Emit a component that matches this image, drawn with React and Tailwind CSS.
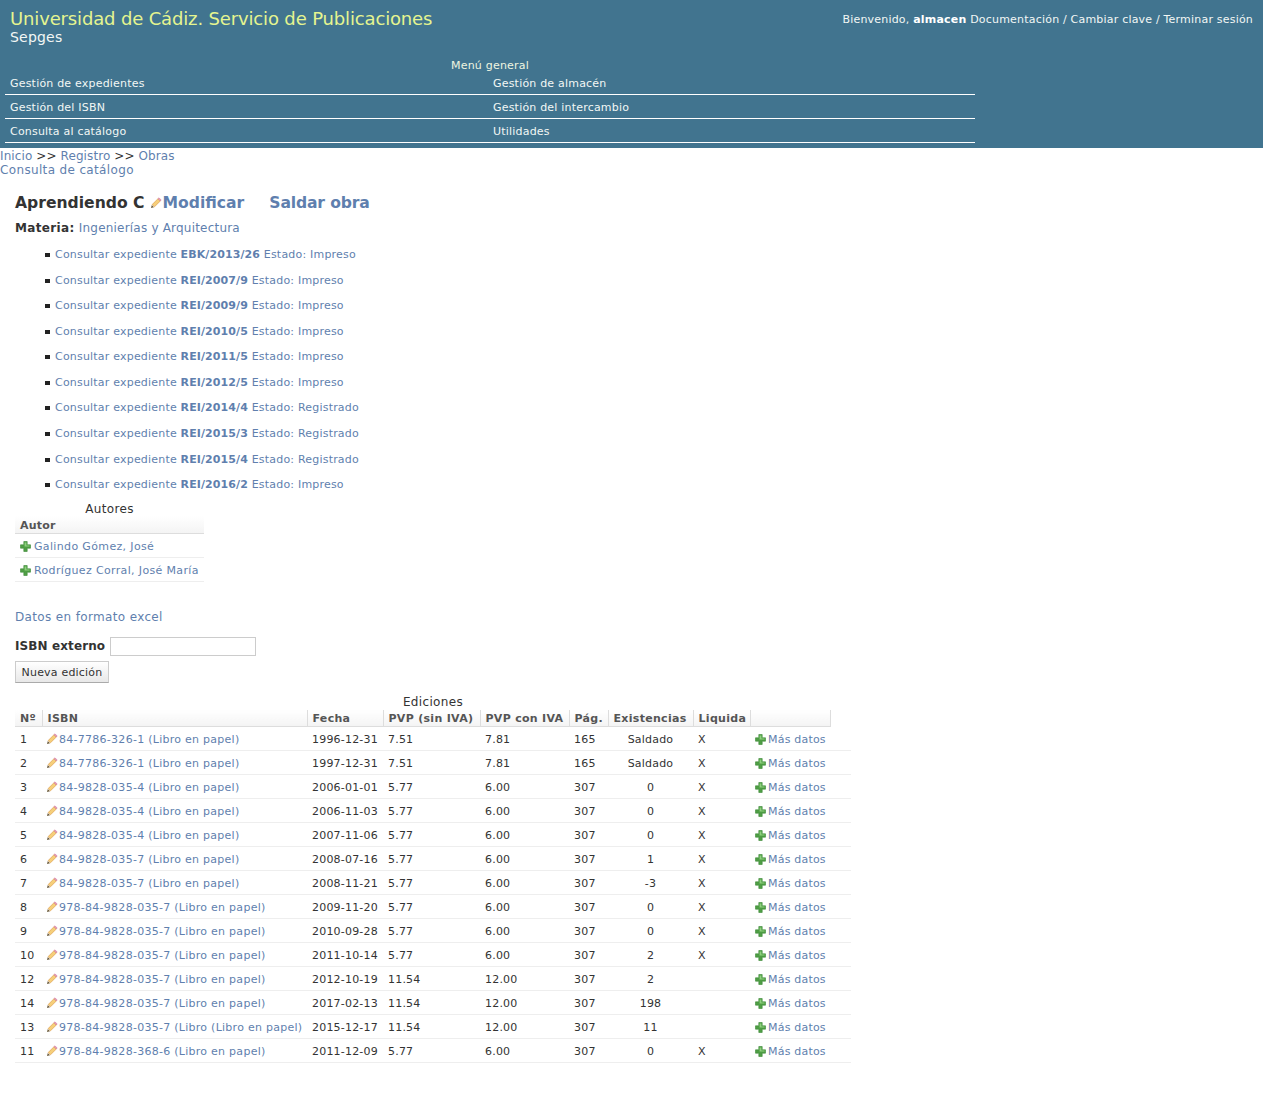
const menu = [
  ["Gestión de expedientes", "Gestión de almacén"],
  ["Gestión del ISBN", "Gestión del intercambio"],
  ["Consulta al catálogo", "Utilidades"],
];

const expedientes = [
  ["EBK/2013/26", "Impreso"],
  ["REI/2007/9", "Impreso"],
  ["REI/2009/9", "Impreso"],
  ["REI/2010/5", "Impreso"],
  ["REI/2011/5", "Impreso"],
  ["REI/2012/5", "Impreso"],
  ["REI/2014/4", "Registrado"],
  ["REI/2015/3", "Registrado"],
  ["REI/2015/4", "Registrado"],
  ["REI/2016/2", "Impreso"],
];

const ediciones = [
  ["1", "84-7786-326-1 (Libro en papel)", "1996-12-31", "7.51", "7.81", "165", "Saldado", "X"],
  ["2", "84-7786-326-1 (Libro en papel)", "1997-12-31", "7.51", "7.81", "165", "Saldado", "X"],
  ["3", "84-9828-035-4 (Libro en papel)", "2006-01-01", "5.77", "6.00", "307", "0", "X"],
  ["4", "84-9828-035-4 (Libro en papel)", "2006-11-03", "5.77", "6.00", "307", "0", "X"],
  ["5", "84-9828-035-4 (Libro en papel)", "2007-11-06", "5.77", "6.00", "307", "0", "X"],
  ["6", "84-9828-035-7 (Libro en papel)", "2008-07-16", "5.77", "6.00", "307", "1", "X"],
  ["7", "84-9828-035-7 (Libro en papel)", "2008-11-21", "5.77", "6.00", "307", "-3", "X"],
  ["8", "978-84-9828-035-7 (Libro en papel)", "2009-11-20", "5.77", "6.00", "307", "0", "X"],
  ["9", "978-84-9828-035-7 (Libro en papel)", "2010-09-28", "5.77", "6.00", "307", "0", "X"],
  ["10", "978-84-9828-035-7 (Libro en papel)", "2011-10-14", "5.77", "6.00", "307", "2", "X"],
  ["12", "978-84-9828-035-7 (Libro en papel)", "2012-10-19", "11.54", "12.00", "307", "2", ""],
  ["14", "978-84-9828-035-7 (Libro en papel)", "2017-02-13", "11.54", "12.00", "307", "198", ""],
  ["13", "978-84-9828-035-7 (Libro (Libro en papel)", "2015-12-17", "11.54", "12.00", "307", "11", ""],
  ["11", "978-84-9828-368-6 (Libro en papel)", "2011-12-09", "5.77", "6.00", "307", "0", "X"],
];

const Pencil = ({ className = "" }) => (
  <svg width="12" height="12" viewBox="0 0 12 12" className={`inline-block align-[-2px] shrink-0 ${className}`}>
    <path d="M1 11 L1.8 8 L4 10.2 Z" fill="#6b5a3a" />
    <path d="M2.2 7.5 L8 1.7 L10.3 4 L4.5 9.8 Z" fill="#f6cf7a" stroke="#d9903a" strokeWidth="0.6" />
    <path d="M8 1.7 L9 0.8 L11.2 3 L10.3 4 Z" fill="#eea0bc" stroke="#c4708f" strokeWidth="0.5" />
  </svg>
);

const Plus = () => (
  <svg width="11" height="11" viewBox="0 0 11 11" className="inline-block align-[-2px] shrink-0">
    <path d="M3.8 0.5 H7.2 V3.8 H10.5 V7.2 H7.2 V10.5 H3.8 V7.2 H0.5 V3.8 H3.8 Z" fill="#4f9e45" stroke="#3c8a38" strokeWidth="0.6" />
    <path d="M4.6 1.5 H6.4 V4.6 H9.5 V5.4 H4.6 Z" fill="#8fd07f" />
  </svg>
);

const linkColor = "text-[#5f7fae]";
const thClass = "h-[17px] whitespace-nowrap px-[5px] pt-[1px] text-left text-[11px] font-bold tracking-[0.3px] text-[#555] border-b border-[#ddd] border-r align-middle leading-[14px] bg-gradient-to-b from-white to-[#f4f4f4]";

export default function App() {
  return (
    <div className="min-h-[1116px] bg-white text-[12px] text-[#333] tracking-[0.35px]" style={{ fontFamily: '"DejaVu Sans", sans-serif' }}>
      <div className="h-[148px] bg-[#41748f] text-[11px] tracking-[0.2px] text-[#f2f7f5]">
        <div className="flex justify-between px-[10px] pt-[8px]">
          <div>
            <div className="text-[18px] leading-[21px] tracking-[-0.15px] text-[#e5f58f]">Universidad de Cádiz. Servicio de Publicaciones</div>
            <div className="text-[14px] leading-[17px] tracking-[0.2px]">Sepges</div>
          </div>
          <div className="pt-[4px] leading-[15px]">
            Bienvenido, <b className="text-white">almacen</b> Documentación / Cambiar clave / Terminar sesión
          </div>
        </div>
        <table className="ml-[5px] mt-[12px] w-[970px] table-fixed border-collapse">
          <caption className="h-[12px] text-center leading-[16px] text-[#eef4e0]">Menú general</caption>
          <tbody>
            {menu.map((row) => (
              <tr key={row[0]} className="h-[24px] border-b border-white">
                <td className="w-[483px] px-[5px] pt-[4px] leading-[14px]">{row[0]}</td>
                <td className="px-[5px] pt-[4px] leading-[14px]">{row[1]}</td>
              </tr>
            ))}
          </tbody>
        </table>
      </div>

      <div className={`pt-[1px] leading-[14px] ${linkColor}`}>
        <div className="tracking-[0.1px]">Inicio <span className="text-[#333]">&gt;&gt;</span> Registro <span className="text-[#333]">&gt;&gt;</span> Obras</div>
        <div>Consulta de catálogo</div>
      </div>

      <div className="px-[15px]">
        <h1 className="mt-[16px] flex items-center text-[15.6px] font-bold leading-[20px] tracking-normal">
          <span>Aprendiendo C</span>
          <span className="ml-[5px] flex"><Pencil /></span>
          <span className="ml-[1px] text-[#5f7fae]">Modificar</span>
          <span className="ml-[25px] tracking-[-0.15px] text-[#5f7fae]">Saldar obra</span>
        </h1>
        <div className="mt-[7px] leading-[16px]">
          <b>Materia:</b> <span className={`tracking-[0.2px] ${linkColor}`}>Ingenierías y Arquitectura</span>
        </div>

        <ul className="mt-[6.4px] pl-[30px] text-[11px] tracking-[0.2px]">
          {expedientes.map(([code, estado]) => (
            <li key={code} className={`flex h-[25.56px] items-center leading-[14px] ${linkColor}`}>
              <span className="mr-[5px] h-[4px] w-[5px] bg-[#222]"></span>
              <span>Consultar expediente <b className="tracking-[0.1px]">{code}</b> Estado: {estado}</span>
            </li>
          ))}
        </ul>

        <table className="mt-[3.6px] w-[189px] table-fixed border-collapse">
          <caption className="h-[15px] text-center leading-[17px]">Autores</caption>
          <thead>
            <tr>
              <th className="h-[17px] px-[5px] pt-[2px] text-left text-[11px] font-bold tracking-[0.2px] text-[#555] border-b border-[#ddd] leading-[14px] bg-gradient-to-b from-white to-[#f4f4f4]">Autor</th>
            </tr>
          </thead>
          <tbody>
            {["Galindo Gómez, José", "Rodríguez Corral, José María"].map((a) => (
              <tr key={a} className="h-[24px] border-b border-[#eee] text-[11px] tracking-[0.35px]">
                <td className={`whitespace-nowrap px-[5px] pt-[4px] leading-[14px] ${linkColor}`}>
                  <Plus /><span className="ml-[3px]">{a}</span>
                </td>
              </tr>
            ))}
          </tbody>
        </table>

        <div className={`mt-[27px] leading-[16px] ${linkColor}`}>Datos en formato excel</div>

        <div className="mt-[12px] flex items-center">
          <b className="text-[12px] tracking-[0.1px]">ISBN externo</b>
          <input type="text" className="ml-[5px] h-[19px] w-[146px] border border-[#ccc] bg-white" />
        </div>
        <button className="mt-[5px] block h-[22px] w-[94px] border border-[#ccc] border-b-[#aaa] bg-gradient-to-b from-white to-[#e8e8e8] pt-[2px] text-center text-[11px] tracking-[0.2px] leading-[14px]">Nueva edición</button>

        <table className="mt-[12px] w-[836px] table-fixed border-collapse">
          <caption className="h-[15px] text-center leading-[15px]">Ediciones</caption>
          <colgroup>
            <col className="w-[27px]" />
            <col className="w-[265px]" />
            <col className="w-[76px]" />
            <col className="w-[97px]" />
            <col className="w-[89px]" />
            <col className="w-[39px]" />
            <col className="w-[85px]" />
            <col className="w-[57px]" />
            <col className="w-[80px]" />
            <col className="w-[21px]" />
          </colgroup>
          <thead>
            <tr>
              <th className={thClass}>Nº</th>
              <th className={thClass}>ISBN</th>
              <th className={thClass}>Fecha</th>
              <th className={thClass}>PVP (sin IVA)</th>
              <th className={thClass}>PVP con IVA</th>
              <th className={thClass}>Pág.</th>
              <th className={thClass}>Existencias</th>
              <th className={thClass}>Liquida</th>
              <th className={thClass}></th>
              <th className="h-[17px]"></th>
            </tr>
          </thead>
          <tbody>
            {ediciones.map((r) => (
              <tr key={r[0]} className="h-[24px] border-b border-[#eee] text-[11px] tracking-[0.2px] [&>td]:pt-[3px] [&>td]:leading-[14px]">
                <td className="px-[5px]">{r[0]}</td>
                <td className={`whitespace-nowrap px-[5px] tracking-[0.27px] ${linkColor}`}>
                  <Pencil className="-ml-[1px] mr-[1px]" />{r[1]}
                </td>
                <td className="whitespace-nowrap px-[5px]">{r[2]}</td>
                <td className="px-[5px]">{r[3]}</td>
                <td className="px-[5px]">{r[4]}</td>
                <td className="px-[5px]">{r[5]}</td>
                <td className="px-[5px] text-center">{r[6]}</td>
                <td className="px-[5px]">{r[7]}</td>
                <td colSpan={2} className={`whitespace-nowrap px-[5px] tracking-[0.2px] ${linkColor}`}>
                  <Plus /><span className="ml-[2px]">Más datos</span>
                </td>
              </tr>
            ))}
          </tbody>
        </table>
      </div>
    </div>
  );
}
